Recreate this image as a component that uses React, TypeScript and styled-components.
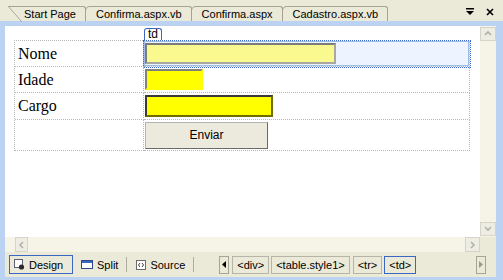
import styled, { createGlobalStyle } from "styled-components";

const GlobalStyle = createGlobalStyle`
  html, body { margin: 0; padding: 0; background: #ebe9d7; }
  * { box-sizing: border-box; }
`;

const Window = styled.div`
  width: 503px;
  height: 280px;
  overflow: hidden;
  display: flex;
  flex-direction: column;
  background: #ebe9d7;
  font-family: "Liberation Sans", Arial, sans-serif;
  font-size: 11px;
  color: #000;
`;

const TabStrip = styled.div`
  height: 21px;
  flex-shrink: 0;
  display: flex;
  align-items: flex-end;
  padding-left: 8px;
`;

const Tab = styled.div<{ $first?: boolean }>`
  position: relative;
  height: 15px;
  display: flex;
  align-items: center;
  padding: 0 9px 0 ${({ $first }) => ($first ? "15px" : "10px")};
  border: 1px solid #a5a393;
  border-bottom: none;
  border-left-color: ${({ $first }) => ($first ? "transparent" : "#a5a393")};
  border-radius: ${({ $first }) => ($first ? "0 3px 0 0" : "5px 3px 0 0")};
  margin-left: ${({ $first }) => ($first ? "0" : "-1px")};
  white-space: nowrap;

  &::before {
    content: "";
    display: ${({ $first }) => ($first ? "block" : "none")};
    position: absolute;
    left: -1px;
    top: -1px;
    width: 14px;
    height: 16px;
    background: linear-gradient(
      to top right,
      transparent calc(50% - 0.7px),
      #a5a393 50%,
      transparent calc(50% + 0.7px)
    );
  }
`;

const StripTools = styled.div`
  margin-left: auto;
  align-self: center;
  display: flex;
  align-items: center;
  gap: 12px;
  padding: 2px 9px 0 0;
`;

const Frame = styled.div`
  flex: 1;
  display: flex;
  flex-direction: column;
  border-style: solid;
  border-color: #bcd2f3;
  border-width: 5px 7px 3px 5px;
`;

const EditorBody = styled.div`
  height: 211px;
  display: flex;
`;

const Canvas = styled.div`
  flex: 1;
  background: #fff;
  padding: 14px 0 0 9px;
`;

const Table = styled.div`
  width: 455px;
  display: grid;
  grid-template-columns: 129px 326px;
  grid-template-rows: 26px 26px 27px 31px;
  border-top: 1px dotted #b8b8b8;
  border-left: 1px dotted #b8b8b8;
`;

const Cell = styled.div<{ $selected?: boolean }>`
  position: relative;
  display: flex;
  align-items: center;
  padding-left: 1px;
  border-right: 1px dotted #b8b8b8;
  border-bottom: 1px dotted #b8b8b8;
  background: ${({ $selected }) => ($selected ? "#eef4ff" : "transparent")};
  outline: ${({ $selected }) => ($selected ? "1px dotted #3a66c4" : "none")};
  outline-offset: 0;
  box-shadow: ${({ $selected }) => ($selected ? "inset 0 0 0 1px #9fbbe8" : "none")};
`;

const Label = styled(Cell)`
  padding-left: 3px;
  font-family: "Liberation Serif", "Times New Roman", serif;
  font-size: 16px;
`;

const CellTag = styled.div`
  position: absolute;
  left: 0;
  top: -13px;
  height: 12px;
  padding: 0 3px;
  line-height: 11px;
  font-size: 12px;
  background: #fff;
  border: 1px solid #3a66c4;
  border-bottom: none;
  border-radius: 3px 3px 0 0;
`;

type FieldKind = "pale" | "plain" | "dark";

const fieldColors: Record<FieldKind, string> = {
  pale: "#7c7c7c #a8a8a0 #a8a8a0 #7c7c7c",
  plain: "#808080 #ffff00 #ffff00 #808080",
  dark: "#3a3a3a #6e6e00 #6e6e00 #3a3a3a",
};

const Field = styled.div<{ $kind: FieldKind; $w: number; $h: number }>`
  width: ${({ $w }) => $w}px;
  height: ${({ $h }) => $h}px;
  background: ${({ $kind }) => ($kind === "pale" ? "#f9f98f" : "#ffff00")};
  border: 2px solid;
  border-color: ${({ $kind }) => fieldColors[$kind]};
`;

const SubmitButton = styled.div`
  width: 123px;
  height: 27px;
  display: flex;
  align-items: center;
  justify-content: center;
  background: #eceadc;
  border: 1px solid;
  border-color: #b4b4b4 #6a6a6a #6a6a6a #b4b4b4;
  font-size: 12px;
`;

const VScroll = styled.div`
  width: 16px;
  display: flex;
  flex-direction: column;
  justify-content: space-between;
  padding: 1px 0 1px 0;
  background: #f5f4e6;
`;

const ArrowBox = styled.div<{ $w: number; $h: number }>`
  width: ${({ $w }) => $w}px;
  height: ${({ $h }) => $h}px;
  display: flex;
  align-items: center;
  justify-content: center;
  background: #eeede4;
  border: 1px solid #d6d4c6;
`;

const HScroll = styled.div`
  height: 15px;
  display: flex;
  align-items: stretch;
  background: #f5f4e6;
  padding-left: 10px;
`;

const HTrack = styled.div`
  flex: 1;
`;

const ScrollCorner = styled.div`
  width: 16px;
  background: #ebe9d7;
`;

const BottomBar = styled.div`
  height: 25px;
  display: flex;
  align-items: center;
  padding: 0 10px 0 4px;
  background: #ebe9d7;
`;

const ViewTab = styled.div<{ $active?: boolean }>`
  height: 19px;
  display: flex;
  align-items: center;
  gap: 4px;
  padding: 0 4px;
  margin-left: ${({ $active }) => ($active ? "0" : "3px")};
  border: 1px solid ${({ $active }) => ($active ? "#3a66c4" : "transparent")};
  width: ${({ $active }) => ($active ? "64px" : "auto")};
`;

const Separator = styled.div`
  width: 1px;
  height: 15px;
  margin: 0 1px 0 3px;
  background: #b0ae9e;
`;

const Crumbs = styled.div`
  display: flex;
  align-items: center;
  margin-left: 24px;
`;

const NavBox = styled.div`
  width: 10px;
  height: 18px;
  display: flex;
  align-items: center;
  justify-content: center;
  border: 1px solid #a6a496;
`;

const Crumb = styled.div<{ $active?: boolean; $ml: number }>`
  height: 18px;
  display: flex;
  align-items: center;
  padding: 0 4px;
  margin-left: ${({ $ml }) => $ml}px;
  border: 1px solid ${({ $active }) => ($active ? "#3a66c4" : "#b6b4a6")};
`;

const RightNav = styled(NavBox)`
  margin-left: auto;
`;

const Chevron = ({ dir }: { dir: "up" | "down" | "left" | "right" }) => {
  const d = {
    up: "M2 6 L5 3 L8 6",
    down: "M2 3 L5 6 L8 3",
    left: "M6 2 L3 5 L6 8",
    right: "M3 2 L6 5 L3 8",
  }[dir];
  return (
    <svg width="10" height="10" viewBox="0 0 10 10">
      <path d={d} fill="none" stroke="#b3b1a5" strokeWidth="1.6" />
    </svg>
  );
};

const Triangle = ({ dir, color }: { dir: "left" | "right"; color: string }) => (
  <svg width="4" height="7" viewBox="0 0 4 7">
    <polygon points={dir === "left" ? "4,0 0,3.5 4,7" : "0,0 4,3.5 0,7"} fill={color} />
  </svg>
);

export default function App() {
  const tabs = ["Start Page", "Confirma.aspx.vb", "Confirma.aspx", "Cadastro.aspx.vb"];

  return (
    <>
      <GlobalStyle />
      <Window>
        <TabStrip>
          {tabs.map((t, i) => (
            <Tab key={t} $first={i === 0}>
              {t}
            </Tab>
          ))}
          <StripTools>
            <svg width="8" height="7" viewBox="0 0 8 7">
              <rect x="0" y="0" width="8" height="1.5" fill="#000" />
              <polygon points="0,3 8,3 4,7" fill="#000" />
            </svg>
            <svg width="8" height="8" viewBox="0 0 8 8">
              <path d="M1 1 L7 7 M7 1 L1 7" stroke="#000" strokeWidth="1.6" />
            </svg>
          </StripTools>
        </TabStrip>

        <Frame>
          <EditorBody>
            <Canvas>
              <Table>
                <Label>Nome</Label>
                <Cell $selected>
                  <CellTag>td</CellTag>
                  <Field $kind="pale" $w={191} $h={21} />
                </Cell>
                <Label>Idade</Label>
                <Cell>
                  <Field $kind="plain" $w={58} $h={21} />
                </Cell>
                <Label>Cargo</Label>
                <Cell>
                  <Field $kind="dark" $w={128} $h={22} />
                </Cell>
                <Label />
                <Cell>
                  <SubmitButton>Enviar</SubmitButton>
                </Cell>
              </Table>
            </Canvas>
            <VScroll>
              <ArrowBox $w={16} $h={14}>
                <Chevron dir="up" />
              </ArrowBox>
              <ArrowBox $w={16} $h={14}>
                <Chevron dir="down" />
              </ArrowBox>
            </VScroll>
          </EditorBody>

          <HScroll>
            <ArrowBox $w={13} $h={15}>
              <Chevron dir="left" />
            </ArrowBox>
            <HTrack />
            <ArrowBox $w={15} $h={15}>
              <Chevron dir="right" />
            </ArrowBox>
            <ScrollCorner />
          </HScroll>

          <BottomBar>
            <ViewTab $active>
              <svg width="11" height="11" viewBox="0 0 11 11">
                <rect x="0.5" y="0.5" width="8" height="8" fill="#fff" stroke="#5a6078" />
                <circle cx="7.5" cy="8" r="2.6" fill="#2a2a2a" />
              </svg>
              Design
            </ViewTab>
            <ViewTab>
              <svg width="12" height="9" viewBox="0 0 12 9">
                <rect x="0.5" y="0.5" width="11" height="8" fill="#fff" stroke="#2c4a8c" />
                <rect x="1" y="1" width="10" height="2" fill="#3a66c4" />
              </svg>
              Split
            </ViewTab>
            <Separator />
            <ViewTab>
              <svg width="10" height="10" viewBox="0 0 10 10">
                <rect x="0.5" y="0.5" width="9" height="9" fill="#fff" stroke="#6a6a6a" />
                <path d="M4 3 L2.5 5 L4 7 M6 3 L7.5 5 L6 7" fill="none" stroke="#3a3a3a" />
              </svg>
              Source
            </ViewTab>
            <Separator />
            <Crumbs>
              <NavBox>
                <Triangle dir="left" color="#000" />
              </NavBox>
              <Crumb $ml={3}>&lt;div&gt;</Crumb>
              <Crumb $ml={2}>&lt;table.style1&gt;</Crumb>
              <Crumb $ml={3}>&lt;tr&gt;</Crumb>
              <Crumb $ml={2} $active>
                &lt;td&gt;
              </Crumb>
            </Crumbs>
            <RightNav>
              <Triangle dir="right" color="#9a9888" />
            </RightNav>
          </BottomBar>
        </Frame>
      </Window>
    </>
  );
}
